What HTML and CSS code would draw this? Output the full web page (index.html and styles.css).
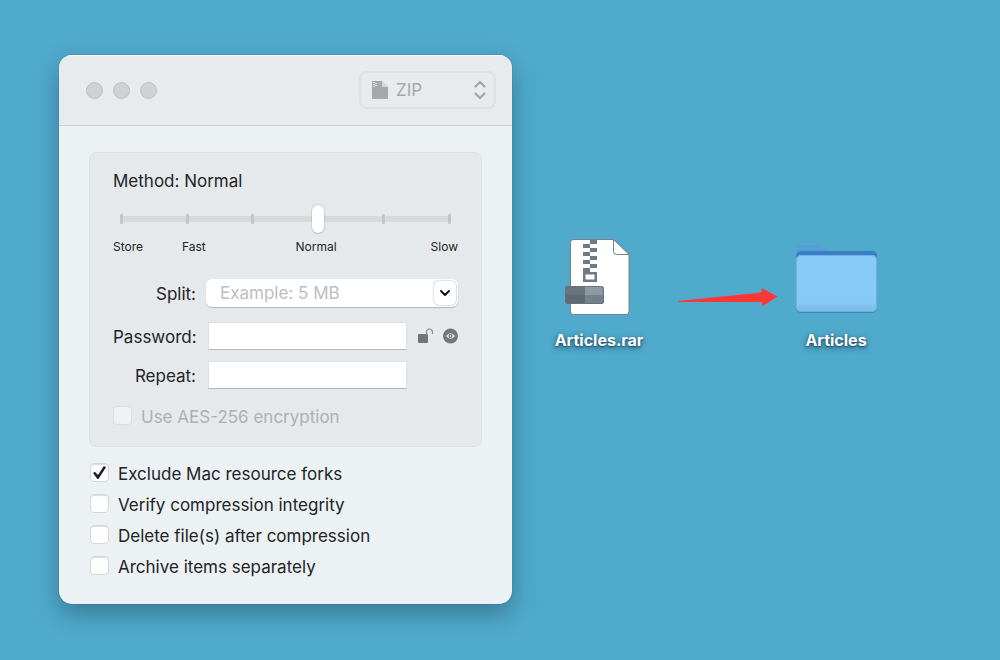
FILE: index.html
```html
<!DOCTYPE html>
<html lang="en">
<head>
    <meta charset="UTF-8">
    <meta name="viewport" content="width=device-width, initial-scale=1.0">
    <title>Archiver</title>
    <link rel="stylesheet" href="styles.css">
</head>
<body>
    <main class="desktop">
        <form class="window">
            <header class="titlebar">
                <div class="lights">
                    <span></span><span></span><span></span>
                </div>
                <div class="format">
                    <svg class="format-icon" viewBox="0 0 16 20" width="16" height="20">
                        <path d="M0 1h10l6 6v12H0z" fill="#a6a9aa"/>
                        <path d="M10 1l6 6h-6z" fill="#d6d9da"/>
                        <path d="M1 2h2v1H1zM3 3h2v1H3zM1 4h2v1H1zM3 5h2v1H3zM1 6h2v1H1z" fill="#dfe2e3"/>
                    </svg>
                    <select aria-label="Archive format" disabled>
                        <option>ZIP</option>
                    </select>
                    <svg class="format-arrows" viewBox="0 0 12 20" width="12" height="20">
                        <path d="M1.500 6.500L6 2l4.500 4.500M1.500 13.500L6 18l4.500-4.500" fill="none" stroke="#a3a6a8" stroke-width="2.200" stroke-linecap="round" stroke-linejoin="round"/>
                    </svg>
                </div>
            </header>

            <div class="content">
                <section class="panel">
                    <label class="method" for="method">Method: Normal</label>
                    <div class="slider">
                        <div class="ticks">
                            <i></i><i></i><i></i><i></i><i></i><i></i>
                        </div>
                        <input type="range" id="method" min="0" max="5" value="3">
                    </div>
                    <div class="tick-labels">
                        <span>Store</span>
                        <span>Fast</span>
                        <span>Normal</span>
                        <span>Slow</span>
                    </div>

                    <div class="row split">
                        <label for="split">Split:</label>
                        <div class="combo">
                            <input type="text" id="split" placeholder="Example: 5 MB">
                            <button type="button" aria-label="Show sizes">
                                <svg viewBox="0 0 12 8" width="12" height="8">
                                    <path d="M2 2l4 4 4-4" fill="none" stroke="#111" stroke-width="2" stroke-linecap="round" stroke-linejoin="round"/>
                                </svg>
                            </button>
                        </div>
                    </div>

                    <div class="row">
                        <label for="password">Password:</label>
                        <input type="password" id="password">
                        <div class="tools">
                            <button type="button" aria-label="Keychain">
                                <svg viewBox="0 0 16 16" width="16" height="16">
                                    <rect x="1" y="6" width="10" height="9" rx="1" fill="#737678"/>
                                    <path d="M9.500 7V4a3 3 0 0 1 6 0v2" fill="none" stroke="#8a8d8f" stroke-width="1.200"/>
                                </svg>
                            </button>
                            <button type="button" aria-label="Show password">
                                <svg viewBox="0 0 16 16" width="16" height="16">
                                    <circle cx="8.500" cy="8" r="7.500" fill="#737678"/>
                                    <path d="M4 8Q8.500 2.500 13 8 8.500 13.500 4 8z" fill="#e5e9eb"/>
                                    <circle cx="8.500" cy="8" r="2" fill="#737678"/>
                                    <circle cx="8.500" cy="8" r="0.800" fill="#e5e9eb"/>
                                </svg>
                            </button>
                        </div>
                    </div>

                    <div class="row repeat">
                        <label for="repeat">Repeat:</label>
                        <input type="password" id="repeat">
                    </div>

                    <label class="check disabled"><input type="checkbox" disabled>Use AES-256 encryption</label>
                </section>

                <div class="options">
                    <label class="check"><input type="checkbox" checked>Exclude Mac resource forks</label>
                    <label class="check"><input type="checkbox">Verify compression integrity</label>
                    <label class="check"><input type="checkbox">Delete file(s) after compression</label>
                    <label class="check"><input type="checkbox">Archive items separately</label>
                </div>
            </div>
        </form>

        <div class="files">
            <figure>
                <svg viewBox="0 0 70 78" width="70" height="78">
                    <path d="M9 1.500H49.500L65 16V73.500a3 3 0 0 1-3 3H9.500a3 3 0 0 1-3-3V4.500a3 3 0 0 1 3-3z" fill="#fff" stroke="#76828a"/>
                    <path d="M49.500 1.500L65 16.500H52.500a3 3 0 0 1-3-3z" fill="#fff" stroke="#76828a" stroke-linejoin="round"/>
                    <g fill="#6d7b85">
                        <path d="M26 2h7v4h-7zM19 6h7v4h-7zM26 10h7v4h-7zM19 14h7v4h-7zM26 18h7v4h-7zM19 22h7v4h-7zM26 26h7v4h-7z"/>
                        <path d="M19 30h7v4h7v10H19zM21.500 36.500v5h9v-5z" fill-rule="evenodd"/>
                    </g>
                    <rect x="1" y="48" width="39" height="18" rx="3" fill="#5f6971"/>
                    <path d="M21 48h16a3 3 0 0 1 3 3v6H21z" fill="#8d9aa4"/>
                    <path d="M21 57h19v6a3 3 0 0 1-3 3H21z" fill="#75818a"/>
                    <path d="M4 48h17v9H1v-6a3 3 0 0 1 3-3z" fill="#69747d"/>
                    <rect x="1.500" y="48.500" width="38" height="17" rx="3" fill="none" stroke="#65717a"/>
                </svg>
                <figcaption>Articles.rar</figcaption>
            </figure>

            <svg class="arrow" viewBox="0 0 121 26" width="121" height="26">
                <path d="M21 19L104.500 10.500V6L120.500 14.500 105 24.500V20H21z" fill="#fb3835"/>
            </svg>

            <figure>
                <svg viewBox="0 0 82 78" width="82" height="78">
                    <defs>
                        <linearGradient id="front" x1="0" y1="0" x2="0" y2="1">
                            <stop offset="0" stop-color="#88cbf7"/>
                            <stop offset="0.860" stop-color="#86c9f5"/>
                            <stop offset="0.900" stop-color="#7fc1ee"/>
                            <stop offset="1" stop-color="#7bbdea"/>
                        </linearGradient>
                    </defs>
                    <path d="M1 12a5 5 0 0 1 5-5H23c5 0 7 6 13 6H77a5 5 0 0 1 5 5V30H1z" fill="#559fd5"/>
                    <path d="M1 18a5 5 0 0 1 5-5H77a5 5 0 0 1 5 5V30H1z" fill="#387fc6"/>
                    <rect x="1" y="18" width="81" height="57" rx="5" fill="#4385ab"/>
                    <rect x="1" y="17" width="81" height="57" rx="5" fill="url(#front)"/>
                    <rect x="1.500" y="17.500" width="80" height="56" rx="5" fill="none" stroke="#6fb2e2"/>
                </svg>
                <figcaption>Articles</figcaption>
            </figure>
        </div>
    </main>
</body>
</html>
```
FILE: styles.css
```css
:root {
    --desktop: #50aacc;
    --window: #ecf1f4;
    --titlebar: #e7ebee;
    --panel: #e5e9eb;
    --text: #222426;
    --muted: #adb0b2;
}

* {
    box-sizing: border-box;
    margin: 0;
    padding: 0;
}

body {
    background-color: var(--desktop);
    color: var(--text);
    font-family: Inter, "Liberation Sans", sans-serif;
    font-size: 17px;
    line-height: 20px;
}

svg {
    display: block;
    flex: none;
}

input, select, button {
    font: inherit;
    color: inherit;
    border: none;
    outline: none;
    appearance: none;
}

.desktop {
    display: grid;
    grid-template-columns: 453fr 429fr;
    align-items: start;
    min-height: 100vh;
    padding: 55px 59px 54px;
}

/* window */
.window {
    background-color: var(--window);
    border-radius: 13px;
    overflow: hidden;
    box-shadow: 0 0 1px rgba(0, 40, 60, 0.6), 0 10px 24px rgba(20, 50, 70, 0.4);
}

.titlebar {
    display: flex;
    justify-content: space-between;
    align-items: center;
    height: 71px;
    padding: 0 16px 0 27px;
    background-color: var(--titlebar);
    border-bottom: 1px solid #cdd3d5;
    box-shadow: inset 0 1px #f7f9fa;
}

.lights {
    display: flex;
    gap: 10px;
}

.lights span {
    width: 17px;
    height: 17px;
    border: 1px solid #bcc1c2;
    border-radius: 50%;
    background-color: #cdd2d3;
}

.format {
    position: relative;
}

.format select {
    width: 137px;
    height: 38px;
    padding-left: 35px;
    border: 2px solid #dde1e4;
    border-radius: 8px;
    background-color: transparent;
    color: #a5a8aa;
    opacity: 1;
    display: block;
}

.format-icon, .format-arrows {
    position: absolute;
    top: 9px;
    pointer-events: none;
}

.format-icon {
    left: 13px;
}

.format-arrows {
    right: 10px;
}

.content {
    padding: 26px 30px 26px;
}

.panel {
    padding: 15px 23px 18px;
    border: 1px solid #dce1e3;
    border-radius: 7px;
    background-color: var(--panel);
}

.method {
    display: block;
    line-height: 26px;
    margin-bottom: 11px;
}

/* slider */
.slider {
    display: grid;
    align-items: center;
    margin: 0 2px;
}

.slider > * {
    grid-area: 1 / 1;
}

.ticks {
    display: flex;
    justify-content: space-between;
    height: 10px;
    margin: 0 5px;
    background: linear-gradient(#d6dadb, #d6dadb) center / 100% 6px no-repeat;
}

.ticks i {
    width: 3px;
    border-radius: 1px;
    background-color: #c2c6c8;
}

.slider input {
    width: 100%;
    height: 28px;
    background: transparent;
}

.slider input::-webkit-slider-thumb {
    appearance: none;
    width: 12px;
    height: 28px;
    border-radius: 6px;
    background-color: white;
    box-shadow: 0 0 2px rgba(0, 0, 0, 0.3), 0 1px 1px rgba(0, 0, 0, 0.1);
}

.tick-labels {
    display: grid;
    grid-template-columns: repeat(5, 1fr);
    margin: 6px 0 24px;
    font-size: 12px;
    line-height: 16px;
}

.tick-labels span:nth-child(3) {
    grid-column: 3 / span 2;
    padding-right: 8px;
    text-align: center;
}

.tick-labels span:nth-child(4) {
    text-align: right;
}

/* fields */
.row {
    display: flex;
    align-items: center;
    gap: 12px;
    margin-bottom: 11px;
}

.row label {
    width: 83px;
    padding-top: 2px;
    text-align: right;
}

.row > input {
    flex: 1;
    min-width: 0;
    height: 28px;
    padding: 0 8px;
    border: 1px solid #dde1e3;
    border-bottom-color: #b3b7b9;
    background-color: white;
}

.split {
    gap: 10px;
    margin-bottom: 15px;
}

.repeat {
    padding-right: 51px;
    margin-bottom: 17px;
}

.combo {
    flex: 1;
    display: flex;
    min-width: 0;
    height: 28px;
    padding: 2px;
    border-radius: 6px;
    background-color: white;
    box-shadow: 0 1px 1px #b3b7b9;
}

.combo input {
    flex: 1;
    min-width: 0;
    padding-left: 12px;
    background: transparent;
}

.combo input::placeholder {
    color: #bcbebf;
}

.combo button {
    display: grid;
    place-items: center;
    width: 22px;
    border-radius: 5px;
    background-color: white;
    box-shadow: 0 0 2px rgba(0, 0, 0, 0.4);
}

.tools {
    display: flex;
    gap: 9px;
    margin-left: -2px;
}

.tools button {
    background: transparent;
}

/* check boxes */
.check {
    display: flex;
    align-items: flex-start;
    gap: 9px;
    line-height: 22px;
}

.check input {
    width: 19px;
    height: 19px;
    border: 1px solid #d3d7d9;
    border-radius: 4px;
    background-color: white;
    box-shadow: inset 0 1px 1px #d9dbdc;
    display: grid;
    place-items: center;
}

.check input:checked::before {
    content: "";
    width: 13px;
    height: 13px;
    background-color: #1c1e20;
    clip-path: polygon(0 54%, 14% 44%, 38% 70%, 84% 0, 100% 10%, 42% 100%, 34% 100%);
}

.check.disabled {
    color: var(--muted);
}

.check.disabled input {
    background-color: #f0f2f2;
    border-color: #dadedf;
    box-shadow: none;
}

.options {
    display: flex;
    flex-direction: column;
    gap: 9px;
    padding: 16px 1px 0;
}

/* desktop icons */
.files {
    display: flex;
    align-items: center;
    gap: 11px;
    margin: 183px 0 0 40px;
}

.files figure {
    display: flex;
    flex-direction: column;
    align-items: center;
    gap: 12px;
    flex: 0 0 94px;
}

.files figcaption {
    color: white;
    font-size: 16px;
    font-weight: 700;
    line-height: 24px;
    text-shadow: 0 1px 2px rgba(0, 30, 50, 0.6), 0 2px 6px rgba(0, 30, 50, 0.6);
}
```
